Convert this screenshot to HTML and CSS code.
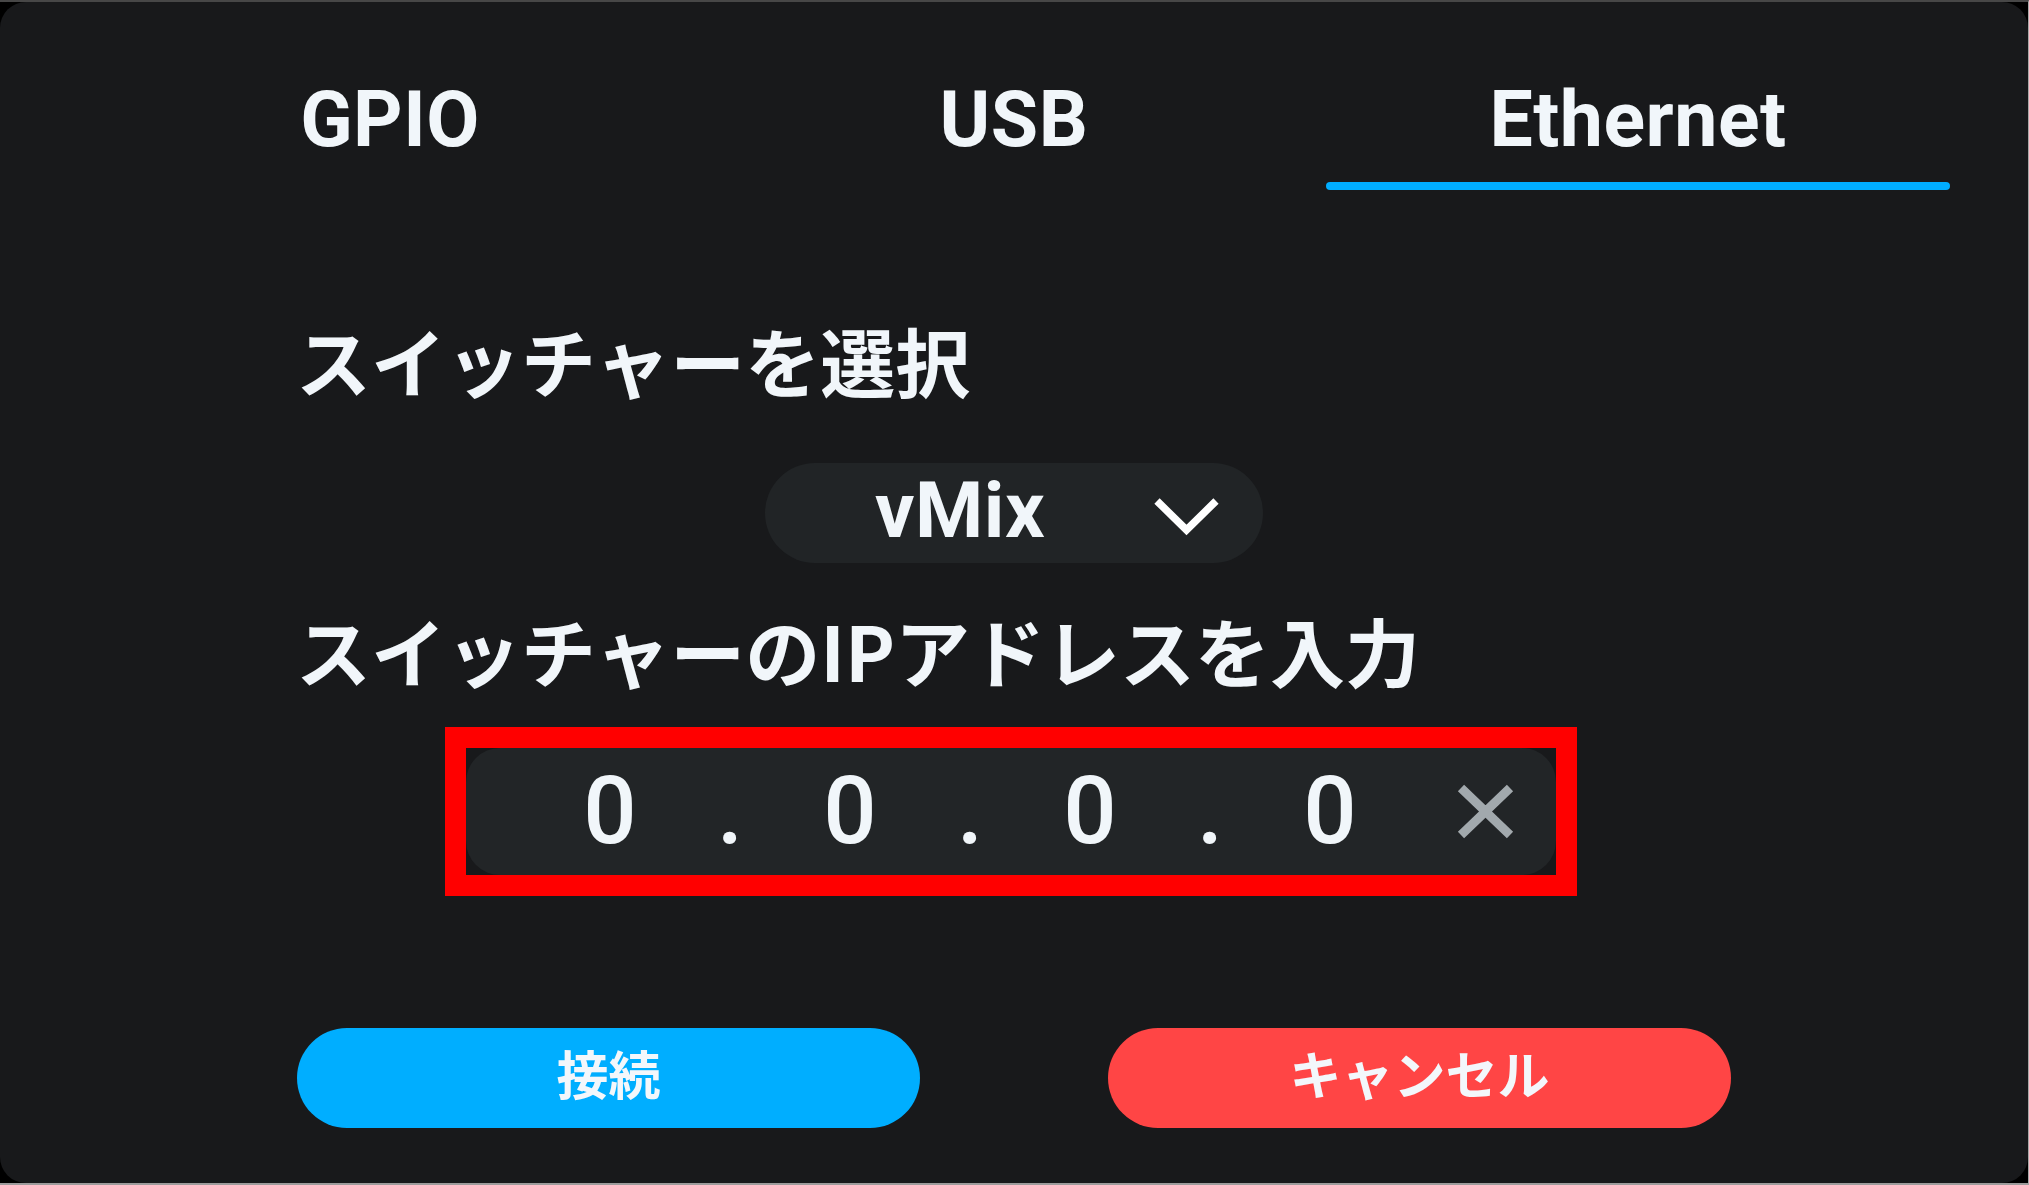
FILE: index.html
```html
<!DOCTYPE html>
<html lang="ja">
<head>
<meta charset="utf-8">
<title>Switcher</title>
<link rel="stylesheet" href="styles.css">
</head>
<body>
<div class="dialog">
  <div class="tabs">
    <div class="tab"><span class="tab-label">GPIO</span><span class="tab-bar"></span></div>
    <div class="tab"><span class="tab-label">USB</span><span class="tab-bar"></span></div>
    <div class="tab tab-active"><span class="tab-label">Ethernet</span><span class="tab-bar"></span></div>
  </div>
  <div class="content">
    <h2 class="label label-first">スイッチャーを選択</h2>
    <div class="select-row">
      <div class="select">
        <span class="select-value">vMix</span>
        <svg class="chevron" viewBox="0 0 67 40" width="67" height="40"><polyline points="4,5 33.5,34 63,5" fill="none" stroke="#ffffff" stroke-width="7.5" stroke-linecap="butt" stroke-linejoin="miter"/></svg>
      </div>
    </div>
    <h2 class="label label-second">スイッチャーのIPアドレスを入力</h2>
    <div class="ip-frame">
      <div class="ip-input">
        <span class="ip-cell">0</span><span class="ip-cell">.</span><span class="ip-cell">0</span><span class="ip-cell">.</span><span class="ip-cell">0</span><span class="ip-cell">.</span><span class="ip-cell">0</span>
        <svg class="clear-icon" viewBox="0 0 57 55" width="57" height="55"><path d="M4 4 L53 51 M53 4 L4 51" fill="none" stroke="#a2a9ad" stroke-width="9" stroke-linecap="butt"/></svg>
      </div>
    </div>
    <div class="actions">
      <button class="btn btn-connect">接続</button>
      <button class="btn btn-cancel">キャンセル</button>
    </div>
  </div>
</div>
</body>
</html>
```

FILE: styles.css
```css
* { box-sizing: border-box; }
html, body { margin: 0; padding: 0; }
body {
  width: 2029px;
  height: 1185px;
  background: #000000;
  border-top: 2px solid #474747;
  border-bottom: 2px solid #9c9c9c;
  border-right: 1px solid #a8a8a8;
  overflow: hidden;
  font-family: "Noto Sans CJK JP", "Noto Sans", sans-serif;
  color: #f1f6fa;
}
.dialog {
  height: 1181px;
  background: #18191b;
  border-radius: 26px;
  padding: 79px 78px 0 78px;
}
.tabs {
  display: grid;
  grid-template-columns: 1fr 1fr 1fr;
}
.tab {
  display: flex;
  flex-direction: column;
  align-items: center;
}
.tab-label {
  font-family: Roboto, "Liberation Sans", sans-serif;
  font-weight: 700;
  font-size: 77px;
  line-height: 79px;
  letter-spacing: 0.5px;
  color: #f1f6fa;
}
.tab-bar {
  display: block;
  width: 100%;
  height: 8px;
  margin-top: 22px;
  border-radius: 4px;
  background: transparent;
}
.tab-active .tab-bar { background: #00adff; }

.label {
  margin: 0;
  margin-left: 218px;
  font-family: "Noto Sans CJK JP", sans-serif;
  font-weight: 700;
  font-size: 75px;
  line-height: 75px;
  color: #f1f6fa;
}
.label-first { margin-top: 132px; }
.label-second { margin-top: 49px; }

.select-row {
  display: flex;
  justify-content: center;
  margin-top: 66px;
}
.select {
  width: 498px;
  height: 100px;
  border-radius: 50px;
  background: #212426;
  display: flex;
  align-items: center;
  padding-left: 110px;
}
.select-value {
  display: inline-block;
  width: 175px;
  margin-bottom: 5px;
  font-family: Roboto, "Liberation Sans", sans-serif;
  font-weight: 700;
  font-size: 78px;
  line-height: 90px;
  letter-spacing: 0.5px;
  color: #f1f6fa;
}
.chevron {
  margin-left: 103px;
  margin-top: 6px;
  flex: none;
}

.ip-frame {
  margin-top: 40px;
  margin-left: 367px;
  width: 1132px;
  height: 169px;
  border: 21px solid #ff0000;
  background: #18191b;
}
.ip-input {
  height: 100%;
  border-radius: 34px;
  background: #222527;
  display: flex;
  align-items: center;
  padding-left: 84px;
}
.ip-cell {
  width: 120px;
  text-align: center;
  font-family: Roboto, "Liberation Sans", sans-serif;
  font-weight: 500;
  font-size: 94px;
  line-height: 127px;
  color: #f1f6fa;
}
.clear-icon {
  margin-left: 67px;
  flex: none;
}

.actions {
  margin-top: 132px;
  display: flex;
  justify-content: center;
  gap: 188px;
}
.btn {
  width: 623px;
  height: 100px;
  border: none;
  border-radius: 50px;
  padding: 0 0 12px 0;
  font-family: "Noto Sans CJK JP", sans-serif;
  font-weight: 700;
  font-size: 52px;
  color: #f3f7fb;
  display: flex;
  align-items: center;
  justify-content: center;
}
.btn-connect { background: #00aeff; }
.btn-cancel { background: #ff4545; }
```
